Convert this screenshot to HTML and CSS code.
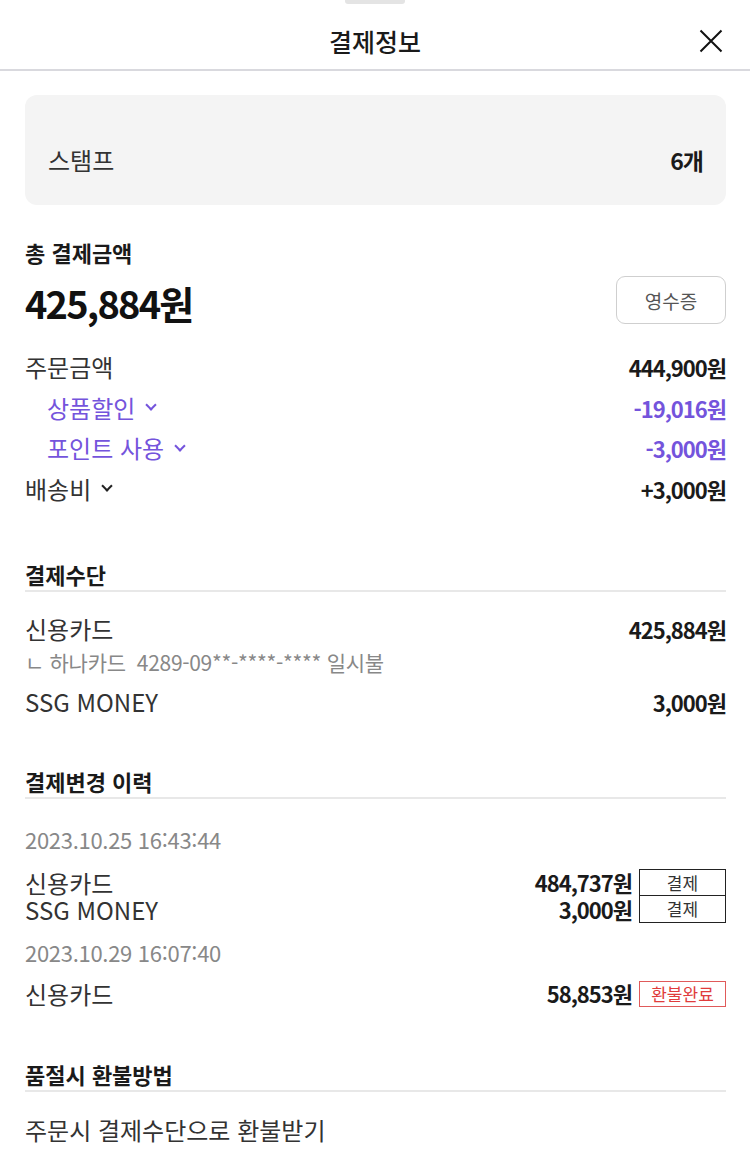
FILE: index.html
```html
<!DOCTYPE html>
<html lang="ko">
<head>
<meta charset="utf-8">
<link rel="stylesheet" href="styles.css">
</head>
<body>
<div class="sheet">
  <div class="handle"></div>
  <header class="header">
    <span></span>
    <h1 class="title">결제정보</h1>
    <button class="close" aria-label="닫기">
      <svg width="24" height="24" viewBox="0 0 24 24"><path d="M1.5 1.5L22.5 22.5M22.5 1.5L1.5 22.5" stroke="#111" stroke-width="2" fill="none"/></svg>
    </button>
  </header>
  <main class="content">
    <div class="stamp">
      <span class="stamp-label">스탬프</span>
      <span class="stamp-value">6개</span>
    </div>

    <section class="total">
      <h2 class="sec-title">총 결제금액</h2>
      <div class="total-row">
        <span class="total-amount">425,884원</span>
        <button class="receipt">영수증</button>
      </div>
      <div class="rows">
        <div class="row"><span class="label">주문금액</span><span class="val">444,900원</span></div>
        <div class="row sub"><span class="label">상품할인 <i class="chev"></i></span><span class="val">-19,016원</span></div>
        <div class="row sub"><span class="label">포인트 사용 <i class="chev"></i></span><span class="val">-3,000원</span></div>
        <div class="row"><span class="label">배송비 <i class="chev dark"></i></span><span class="val">+3,000원</span></div>
      </div>
    </section>

    <section class="block block-pay">
      <h2 class="sec-title lined">결제수단</h2>
      <div class="pay">
        <div class="row"><span class="label">신용카드</span><span class="val">425,884원</span></div>
        <div class="card-info">ㄴ 하나카드&nbsp; 4289-09**-****-**** 일시불</div>
        <div class="row"><span class="label">SSG MONEY</span><span class="val">3,000원</span></div>
      </div>
    </section>

    <section class="block block-history">
      <h2 class="sec-title lined">결제변경 이력</h2>
      <div class="history">
        <div class="date">2023.10.25 16:43:44</div>
        <div class="hrows">
          <div class="hrow"><span class="label">신용카드</span><span class="val">484,737원</span><span class="badge">결제</span></div>
          <div class="hrow"><span class="label">SSG MONEY</span><span class="val">3,000원</span><span class="badge">결제</span></div>
        </div>
        <div class="date">2023.10.29 16:07:40</div>
        <div class="hrows">
          <div class="hrow"><span class="label">신용카드</span><span class="val">58,853원</span><span class="badge refund">환불완료</span></div>
        </div>
      </div>
    </section>

    <section class="block block-refund">
      <h2 class="sec-title lined">품절시 환불방법</h2>
      <p class="refund-text">주문시 결제수단으로 환불받기</p>
    </section>
  </main>
</div>
</body>
</html>
```

FILE: styles.css
```css
* { box-sizing: border-box; }
html, body { margin: 0; padding: 0; background: #fff; }
body {
  font-family: "Noto Sans CJK KR", "Noto Sans", sans-serif;
  color: #222;
}
.sheet { width: 750px; min-height: 1161px; background: #fff; }
.handle {
  width: 60px; height: 4px; margin: 0 auto;
  background: #e4e4e4; border-radius: 0 0 3px 3px;
}
.header {
  display: grid;
  grid-template-columns: 60px 1fr 60px;
  align-items: center;
  height: 67px;
  padding-top: 8px;
  border-bottom: 2px solid #d9d9de;
}
.title {
  margin: 0; text-align: center;
  font-size: 25px; font-weight: 500; color: #1a1a1a;
  line-height: 30px;
}
.close {
  border: 0; background: none; padding: 0;
  width: 24px; height: 24px; justify-self: end; margin-right: 27px;
  display: flex;
}
.content { padding: 24px 24px 0 25px; }
.stamp {
  display: flex; justify-content: space-between; align-items: center;
  height: 110px; background: #f4f4f4; border-radius: 12px;
  padding: 20px 23px 0 23px;
}
.stamp-label { font-size: 24px; color: #333; line-height: 30px; }
.stamp-value { font-size: 23px; font-weight: 700; color: #1a1a1a; letter-spacing: -1px; line-height: 30px; }

.sec-title {
  margin: 0; font-size: 22px; font-weight: 700; color: #1a1a1a;
  line-height: 30px;
}
.total { margin-top: 32px; }
.total-row {
  display: flex; justify-content: space-between; align-items: center;
  height: 48px;
  margin-top: 9px;
}
.total-amount {
  font-size: 38px; font-weight: 700; letter-spacing: -1.8px; color: #111;
  line-height: 48px; padding-top: 5px;
}
.receipt {
  width: 110px; height: 48px; border: 1px solid #cfcfcf; border-radius: 9px;
  background: #fff; font-family: inherit; font-size: 19px; color: #555;
}
.rows { margin-top: 23px; display: flex; flex-direction: column; }
.row { display: flex; justify-content: space-between; align-items: center; height: 40.5px; }
.label { font-size: 24px; color: #333; display: inline-flex; align-items: center; line-height: 30px; }
.val { font-size: 22px; font-weight: 700; color: #1a1a1a; letter-spacing: -1px; line-height: 30px; }
.row.sub .label { padding-left: 22px; color: #7454dc; }
.row.sub .val { color: #7454dc; }
.chev {
  display: inline-block; width: 8px; height: 8px;
  border-right: 2px solid #7454dc; border-bottom: 2px solid #7454dc;
  transform: rotate(45deg); margin: -5px 0 0 12px;
}
.chev.dark { border-color: #222; }

.block-pay { margin-top: 50px; }
.block-history { margin-top: 44px; }
.block-refund { margin-top: 52px; }
.sec-title.lined { padding-bottom: 1px; border-bottom: 2px solid #e8e8e8; }
.pay { margin-top: 17px; }
.card-info { font-size: 21px; color: #888; line-height: 24px; margin: 0 0 8px; letter-spacing: -0.3px; }
.history { margin-top: 26px; }
.date { font-size: 22px; color: #888; line-height: 28px; letter-spacing: -0.3px; }
.hrows { margin: 16px 0 15px; display: flex; flex-direction: column; }
.hrows:last-child { margin: 14px 0 0; }
.hrow { display: flex; align-items: center; height: 27px; }
.hrow .label { flex: 1; line-height: 27px; }
.hrow .val { margin-right: 7px; line-height: 27px; }
.badge {
  width: 87px; height: 27px; border: 1px solid #222;
  display: flex; align-items: center; justify-content: center;
  font-size: 17px; line-height: 20px; color: #333;
}
.hrow + .hrow .badge { border-top: 0; }
.badge.refund { border-color: #e05a5a; color: #e03c3c; height: 26px; }
.refund-text { margin: 23px 0 0; font-size: 24px; color: #333; line-height: 30px; }
```
